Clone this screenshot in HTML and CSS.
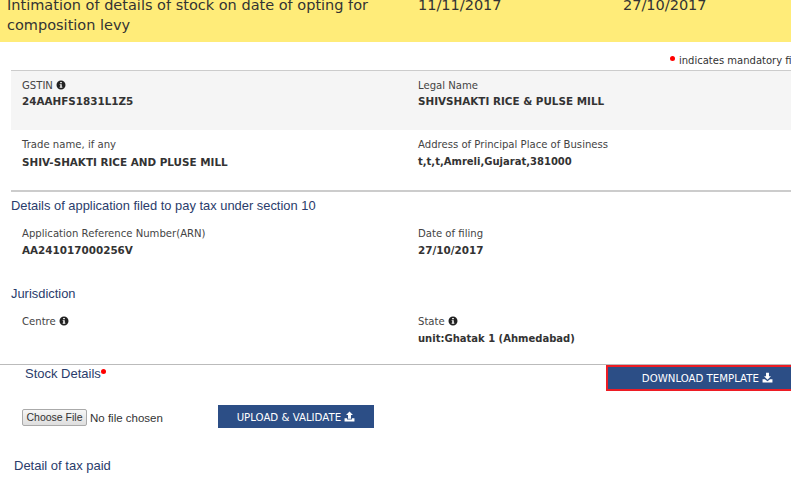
FILE: index.html
```html
<!DOCTYPE html>
<html>
<head>
<meta name="viewport" content="width=device-width, initial-scale=1">
<link rel="stylesheet" href="styles.css">
</head>
<body>

<div class="banner">
  <div class="banner-title">Intimation of details of stock on date of opting for composition levy</div>
  <div class="banner-date">11/11/2017</div>
  <div class="banner-date">27/10/2017</div>
</div>

<div class="mandatory"><span class="req"></span>indicates mandatory fields</div>

<div class="grey-block">
  <div class="row row-one">
    <div class="col-left">
      <div class="lbl">GSTIN <svg class="info" viewBox="0 0 12 12"><path fill-rule="evenodd" d="M6 .6a5.4 5.4 0 1 1 0 10.8A5.4 5.4 0 0 1 6 .6zM5 2.3v1.6h2V2.3zM4.4 5v1h.7v2.2h-.7v1h3.2v-1h-.7V5z" fill="#222"/></svg></div>
      <div class="val">24AAHFS1831L1Z5</div>
    </div>
    <div class="col-right">
      <div class="lbl">Legal Name</div>
      <div class="val">SHIVSHAKTI RICE &amp; PULSE MILL</div>
    </div>
  </div>
  <div class="row row-two">
    <div class="col-left">
      <div class="lbl">Trade name, if any</div>
      <div class="val">SHIV-SHAKTI RICE AND PLUSE MILL</div>
    </div>
    <div class="col-right">
      <div class="lbl">Address of Principal Place of Business</div>
      <div class="val val-mixed">t,t,t,Amreli,Gujarat,381000</div>
    </div>
  </div>
</div>

<div class="section-head first-head">Details of application filed to pay tax under section 10</div>
<div class="row row-three">
  <div class="col-left">
    <div class="lbl">Application Reference Number(ARN)</div>
    <div class="val">AA241017000256V</div>
  </div>
  <div class="col-right">
    <div class="lbl">Date of filing</div>
    <div class="val">27/10/2017</div>
  </div>
</div>

<div class="section-head">Jurisdiction</div>
<div class="row row-four">
  <div class="col-left">
    <div class="lbl">Centre <svg class="info" viewBox="0 0 12 12"><path fill-rule="evenodd" d="M6 .6a5.4 5.4 0 1 1 0 10.8A5.4 5.4 0 0 1 6 .6zM5 2.3v1.6h2V2.3zM4.4 5v1h.7v2.2h-.7v1h3.2v-1h-.7V5z" fill="#222"/></svg></div>
  </div>
  <div class="col-right">
    <div class="lbl">State <svg class="info" viewBox="0 0 12 12"><path fill-rule="evenodd" d="M6 .6a5.4 5.4 0 1 1 0 10.8A5.4 5.4 0 0 1 6 .6zM5 2.3v1.6h2V2.3zM4.4 5v1h.7v2.2h-.7v1h3.2v-1h-.7V5z" fill="#222"/></svg></div>
    <div class="val val-mixed">unit:Ghatak 1 (Ahmedabad)</div>
  </div>
</div>

<div class="stock">
  <div class="stock-title">Stock Details<span class="req req-title"></span></div>
  <button class="btn btn-download">DOWNLOAD TEMPLATE <svg class="dl" viewBox="0 0 12 12"><path d="M4.4 .8h3.2v3.8h2.2L6 8.4 2.2 4.6h2.2z" fill="#fff"/><path d="M.6 8h2.6L6 10l2.8-2h2.6v3.4H.6z" fill="#fff"/></svg></button>
</div>

<div class="upload">
  <input class="file" type="file">
  <button class="btn btn-upload">UPLOAD &amp; VALIDATE <svg class="dl" viewBox="0 0 12 12"><path d="M6 .6l3.8 3.8H7.6v4H4.4v-4H2.2z" fill="#fff"/><path d="M.6 8h2.8v1.4h5.2V8h2.8v3.4H.6z" fill="#fff"/></svg></button>
</div>

<div class="tax-paid">Detail of tax paid</div>

</body>
</html>
```

FILE: styles.css
```css
* {
  box-sizing: border-box;
}

html, body {
  margin: 0;
  overflow: hidden;
}

body {
  width: 791px;
  height: 498px;
  background-color: #fff;
  font-family: "DejaVu Sans", sans-serif;
  color: #333;
}

.banner {
  display: flex;
  height: 47px;
  margin-top: -5px;
  padding-left: 7px;
  background-color: #ffec79;
  font-size: 14.5px;
  line-height: 20px;
  color: #333;
}

.banner-title {
  flex: none;
  width: 411px;
  padding-right: 30px;
}

.banner-date {
  flex: none;
  width: 205px;
}

.mandatory {
  display: flex;
  align-items: center;
  height: 28px;
  padding-top: 8px;
  padding-left: 670px;
  font-size: 10px;
  white-space: nowrap;
}

.req {
  display: inline-block;
  flex: none;
  width: 5px;
  height: 5px;
  margin-right: 4px;
  margin-top: -4px;
  border-radius: 50%;
  background-color: #f00;
}

.grey-block {
  margin-left: 11px;
  border-top: 1px solid #ccc;
  border-bottom: 2px solid #ccc;
}

.row {
  display: flex;
  padding-left: 11px;
}

.row-one {
  height: 59px;
  padding-top: 7px;
  background-color: #f5f5f5;
}

.row-one .val {
  margin-top: 1px;
}

.row-two {
  height: 60px;
  padding-top: 7px;
}

.row-two .val {
  margin-top: 3px;
}

.col-left {
  width: 396px;
}

.lbl {
  font-size: 10.1px;
  line-height: 15px;
  color: #444;
}

.val {
  margin-top: 2px;
  font-size: 10.4px;
  line-height: 14px;
  font-weight: bold;
  color: #333;
}

.val-mixed {
  font-size: 10px;
}

.info {
  width: 10px;
  height: 10px;
  vertical-align: -1px;
}

.section-head {
  padding-left: 11px;
  font-family: "Liberation Sans", sans-serif;
  font-size: 12.9px;
  line-height: 16px;
  color: #2a3c6b;
}

.first-head {
  padding-top: 6px;
}

.row-three {
  height: 72px;
  padding-top: 12px;
}

.row-four {
  height: 62px;
  padding-top: 12px;
}

.row-four .val {
  margin-top: 3px;
}

.row-three, .row-four {
  margin-left: 11px;
}

.stock {
  display: flex;
  justify-content: space-between;
  height: 41px;
  padding-left: 25px;
  border-top: 1px solid #bbb;
}

.stock-title {
  font-family: "Liberation Sans", sans-serif;
  font-size: 13px;
  line-height: 17px;
  color: #2a3c6b;
}

.req-title {
  margin: 0 0 4px 0;
}

.btn {
  border: none;
  background-color: #2c4e86;
  color: #fff;
  font-family: "DejaVu Sans", sans-serif;
  font-size: 10.2px;
}

.btn-download {
  flex: none;
  width: 190px;
  height: 26px;
  margin-right: -5px;
  padding-left: 13px;
  padding-right: 0;
  border: 2px solid #ed1c24;
}

.upload {
  display: flex;
  align-items: center;
  height: 24px;
  padding-left: 22px;
}

.file {
  flex: none;
  width: 196px;
  font-family: "Liberation Sans", sans-serif;
  font-size: 11.5px;
  color: #333;
}

.file::file-selector-button {
  width: 65px;
  height: 17px;
  margin-right: 3px;
  padding: 0;
  border: 1px solid #aaa;
  border-radius: 2px;
  background: linear-gradient(#f6f6f6, #dedede);
  font-size: 10.5px;
  color: #333;
}

.btn-upload {
  flex: none;
  align-self: flex-start;
  width: 156px;
  height: 23px;
  padding: 0;
}

.dl {
  width: 11px;
  height: 11px;
  vertical-align: -1px;
}

.tax-paid {
  padding-top: 29px;
  padding-left: 14px;
  font-family: "Liberation Sans", sans-serif;
  font-size: 13px;
  line-height: 16px;
  color: #2a3c6b;
}
```
